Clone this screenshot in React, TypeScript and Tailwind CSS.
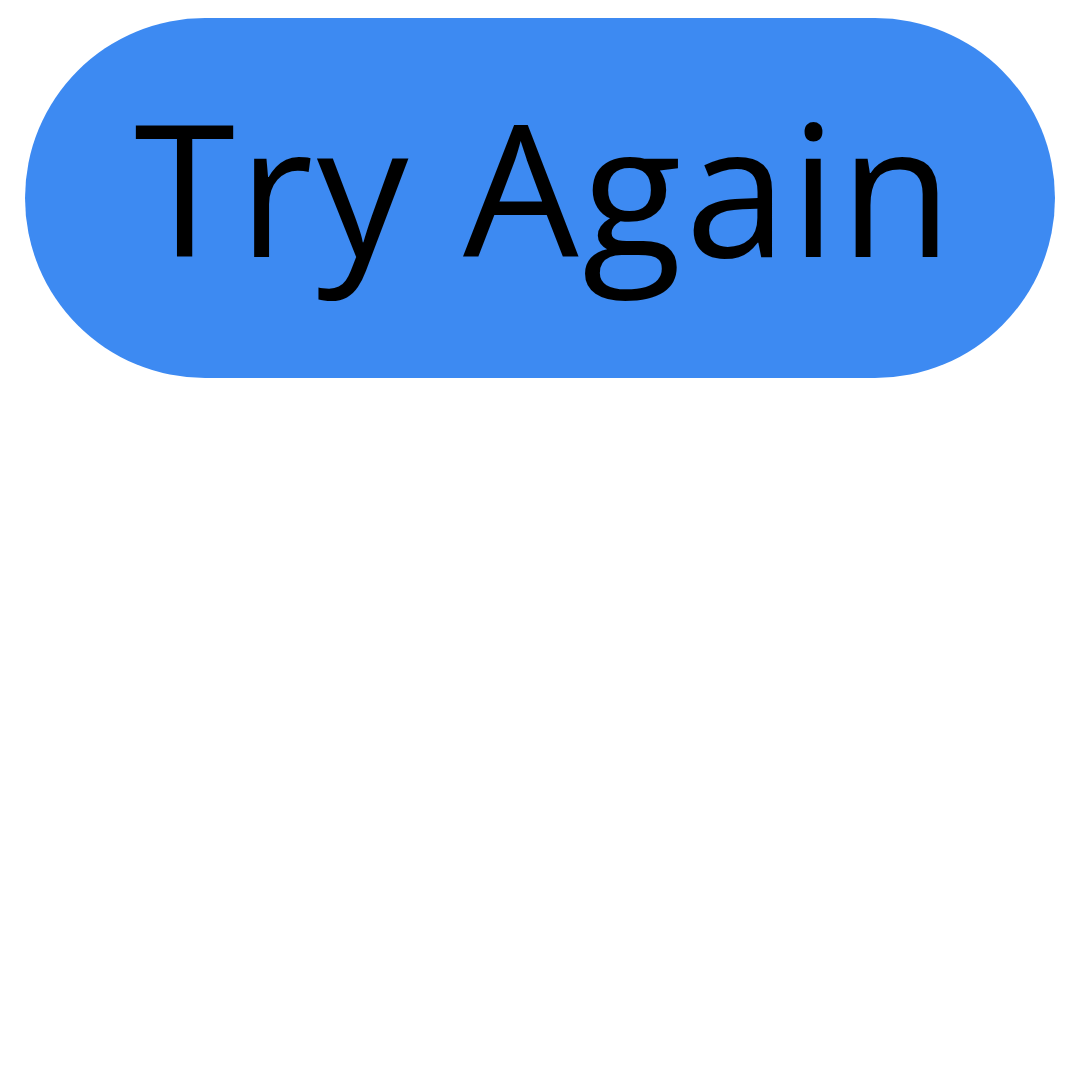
export default function App() {
  return (
    <div className="w-[1080px] h-[1080px] bg-white pt-[18px] pl-[25px]">
      <button className="w-[1030px] h-[360px] rounded-full bg-[#3d8af2] flex items-center justify-center pb-[24px] pl-[10px]">
        <span className="text-black leading-none text-[183px] tracking-[3.5px]" style={{ fontFamily: '"Open Sans", sans-serif' }}>
          Try Again
        </span>
      </button>
    </div>
  );
}
